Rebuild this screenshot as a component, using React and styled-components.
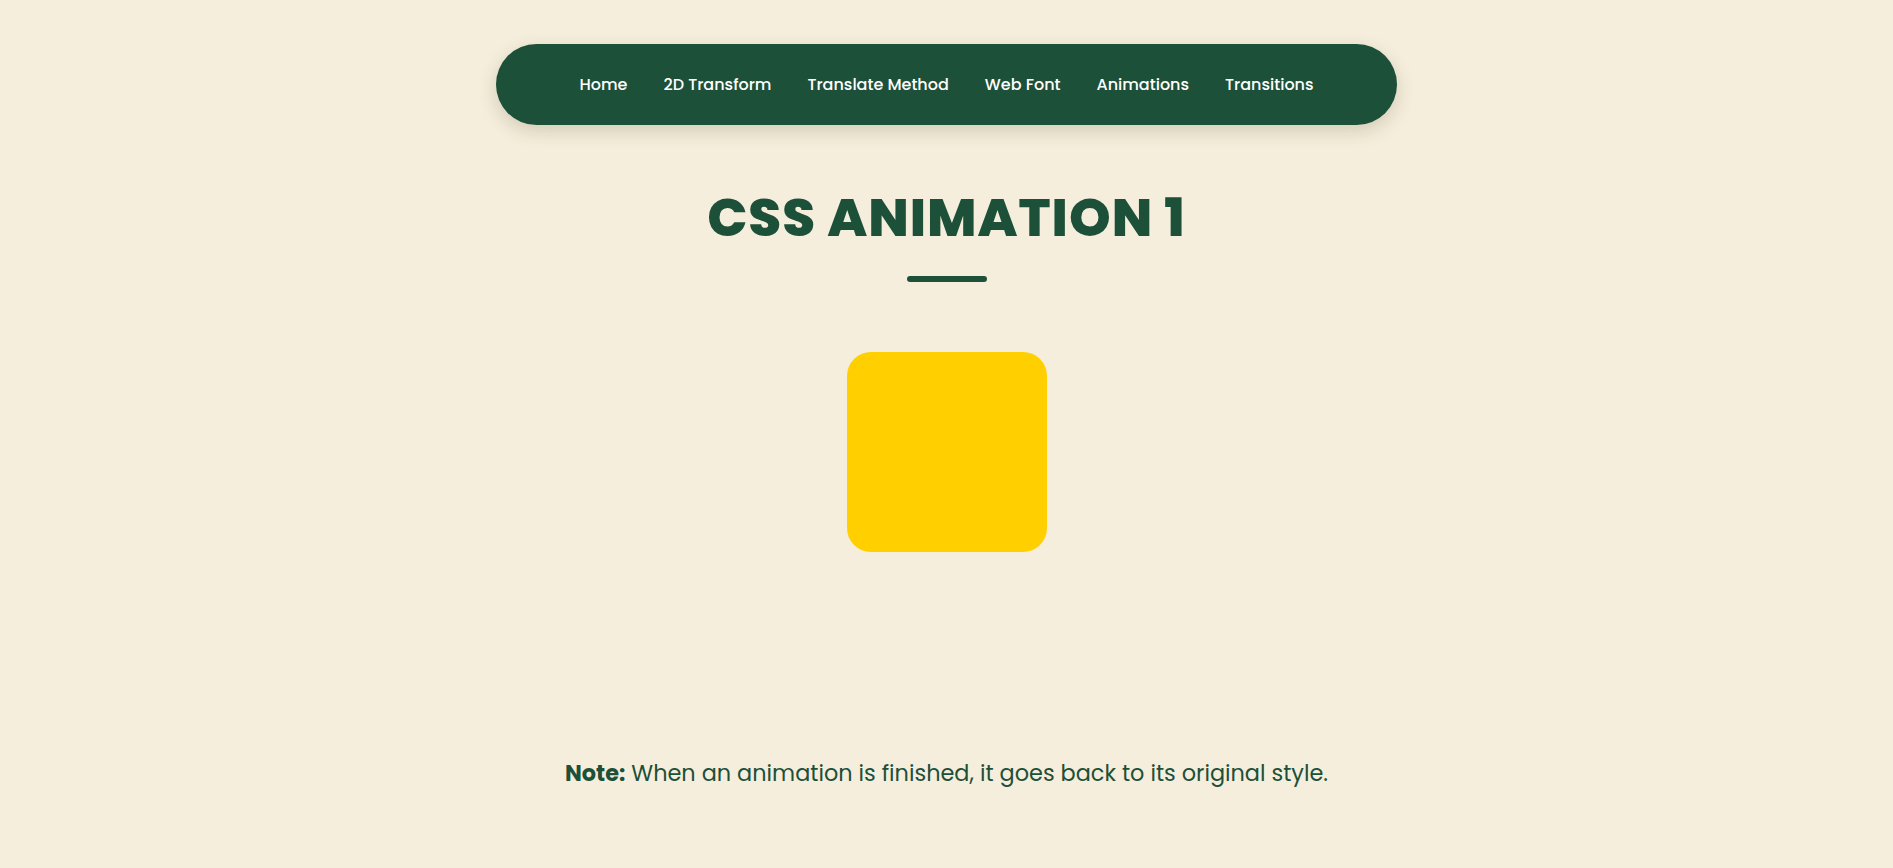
import styled, { createGlobalStyle } from 'styled-components';

const GlobalStyle = createGlobalStyle`
  * {
    margin: 0;
    padding: 0;
    box-sizing: border-box;
  }

  body {
    background-color: #f5eedc;
    font-family: "Poppins", "Inter", "Noto Sans", sans-serif;
    color: #1d5039;
  }
`;

const Page = styled.div`
  min-height: 100vh;
  display: flex;
  flex-direction: column;
  align-items: center;
  padding-top: 44px;
`;

const NavBar = styled.nav`
  width: 901px;
  height: 81px;
  background-color: #1d5039;
  border-radius: 41px;
  box-shadow: 0 6px 18px rgba(60, 50, 20, 0.18);
  display: flex;
  align-items: center;
  justify-content: center;
  gap: 36px;
`;

const NavLink = styled.a`
  color: #ffffff;
  font-size: 16px;
  font-weight: 500;
  text-decoration: none;
  cursor: pointer;
`;

const Title = styled.h1`
  margin-top: 63px;
  font-size: 53px;
  font-weight: 800;
  letter-spacing: 1px;
  line-height: 60px;
  color: #1d5039;
`;

const Underline = styled.div`
  width: 80px;
  height: 6px;
  border-radius: 3px;
  background-color: #1d5039;
  margin-top: 28px;
`;

const Stage = styled.div`
  height: 452px;
  padding-top: 70px;
`;

const Box = styled.div`
  width: 200px;
  height: 200px;
  border-radius: 24px;
  background-color: #ffcf00;
`;

const Note = styled.p`
  margin-top: 22px;
  font-size: 22.4px;
  color: #1d5039;

  strong {
    font-weight: 700;
  }
`;

const links = ['Home', '2D Transform', 'Translate Method', 'Web Font', 'Animations', 'Transitions'];

function App() {
  return (
    <Page>
      <GlobalStyle />
      <NavBar>
        {links.map((l) => (
          <NavLink key={l}>{l}</NavLink>
        ))}
      </NavBar>
      <Title>CSS ANIMATION 1</Title>
      <Underline />
      <Stage>
        <Box />
      </Stage>
      <Note>
        <strong>Note:</strong> When an animation is finished, it goes back to its original style.
      </Note>
    </Page>
  );
}

export default App;
